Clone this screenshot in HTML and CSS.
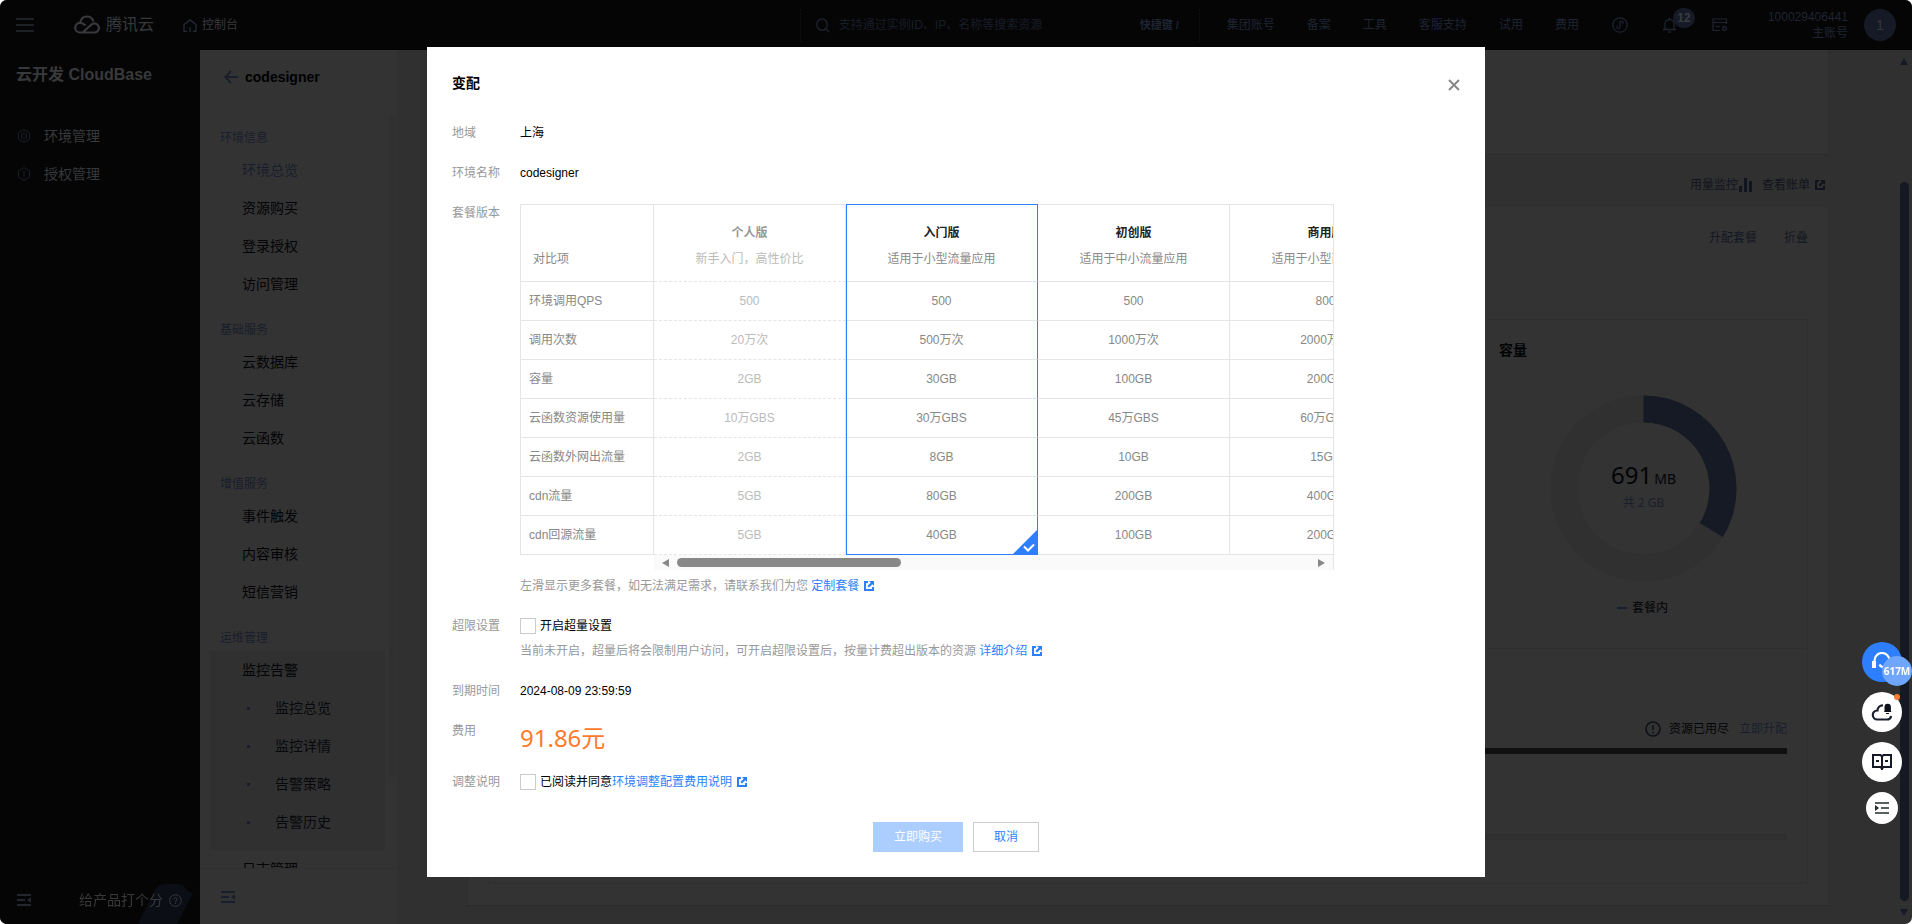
FILE: index.html
```html
<!DOCTYPE html>
<html lang="zh-CN">
<head>
<meta charset="utf-8">
<title>云开发 CloudBase</title>
<link rel="stylesheet" href="styles.css">
</head>
<body>
<svg class="defs" aria-hidden="true">
  <symbol id="ext" viewBox="0 0 10 10"><path d="M4 1H1v8h8V6" fill="none" stroke="currentColor" stroke-width="2"/><path d="M5 0h5v5L8.300 3.300 5 6.600 3.400 5l3.300-3.300z" fill="currentColor"/></symbol>
  <symbol id="fold" viewBox="0 0 14 12"><path d="M0 1h14M0 6h8M0 11h14" fill="none" stroke="currentColor" stroke-width="2"/><path d="M14 3v6l-4-3z" fill="currentColor"/></symbol>
</svg>
<header class="topbar">
  <button class="icon-btn burger" aria-label="菜单"><svg width="18" height="14" viewBox="0 0 18 14"><path d="M0 1h18M0 7h18M0 13h18" stroke="currentColor" stroke-width="1.5"/></svg></button>
  <a class="brand" href="#"><svg width="26" height="20" viewBox="0 0 26 20" fill="none" stroke="currentColor" stroke-width="2.2"><path d="M8.500 17.500L18 9.200a4.500 4.500 0 1 1 2.500 8.300H6a4.800 4.800 0 1 1 0-9.600c2.200 0 3.800 1 5.500 2.600M6.200 7.900C6.800 4 9.500 1.500 13 1.500c3 0 5.500 1.800 6.500 5"/></svg><span>腾讯云</span></a>
  <a class="home" href="#"><svg width="14" height="13" viewBox="0 0 14 13" fill="none" stroke="currentColor" stroke-width="1.300"><path d="M4 12.300H1V5.500L7 .9l6 4.600v6.800h-3M7 8v5"/></svg><span>控制台</span></a>
  <label class="search"><svg width="14" height="15" viewBox="0 0 14 15" fill="none" stroke="currentColor" stroke-width="1.300"><ellipse cx="6" cy="6.500" rx="5.200" ry="5.700"/><path d="M10 11l3.200 3"/></svg><input type="text" aria-label="搜索" placeholder="支持通过实例ID、IP、名称等搜索资源"><span class="hotkey">快捷键 /</span></label>
  <nav class="topnav"><a href="#">集团账号</a><a href="#">备案</a><a href="#">工具</a><a href="#">客服支持</a><a href="#">试用</a><a href="#">费用</a></nav>
  <div class="tools">
    <button class="icon-btn" aria-label="助手"><svg width="16" height="16" viewBox="0 0 16 16" fill="none" stroke="currentColor" stroke-width="1.200"><circle cx="8" cy="8" r="7.200"/><path d="M5 8.500v1.500a1.500 1.500 0 0 0 3 0V5.500a1.500 1.500 0 0 1 3 0V7"/></svg></button>
    <button class="icon-btn bell" aria-label="消息"><svg width="16" height="16" viewBox="0 0 16 16" fill="none" stroke="currentColor" stroke-width="1.300"><path d="M1 12.500h13M3 12V7a4.500 4.500 0 0 1 9 0v5M7.500 2.500V.5M6 15h3"/></svg><span class="count">12</span></button>
    <button class="icon-btn" aria-label="工单"><svg width="16" height="14" viewBox="0 0 16 14" fill="none" stroke="currentColor" stroke-width="1.200"><path d="M8 12.500H1V1h13.500v5M1 4.500h13.500M3.500 8.500h4"/><circle cx="12.500" cy="10.500" r="1.800"/><path d="M12.500 7.500v1M12.500 12.500v1M10 9l1 .6M15 9l-1 .6M10 12l1-.6M15 12l-1-.6"/></svg></button>
  </div>
  <div class="account"><div class="uid"><span>100029406441</span><span>主账号</span></div><span class="avatar">1</span></div>
</header>
<div class="shell">
  <aside class="side">
    <h2>云开发 CloudBase</h2>
    <nav>
      <a href="#"><svg width="14" height="14" viewBox="0 0 14 14" fill="none" stroke="currentColor"><path d="M7 .6l5.600 3.200v6.400L7 13.400 1.400 10.200V3.800z"/><circle cx="7" cy="7" r="2.500"/></svg>环境管理</a>
      <a href="#"><svg width="14" height="14" viewBox="0 0 14 14" fill="none" stroke="currentColor"><path d="M7 .6l5.600 3.200v6.400L7 13.400 1.400 10.200V3.800zM7 4v6"/></svg>授权管理</a>
    </nav>
    <div class="side-foot">
      <button class="icon-btn" aria-label="收起"><svg width="14" height="12"><use href="#fold"/></svg></button>
      <a href="#">给产品打个分<svg width="13" height="13" viewBox="0 0 13 13" fill="none" stroke="currentColor"><circle cx="6.500" cy="6.500" r="5.800"/><path d="M4.800 5.200a1.700 1.700 0 1 1 1.700 2v1M6.500 9v1"/></svg></a>
      <svg class="deco" width="55" height="40" viewBox="0 0 55 40"><path d="M0 40L17 6Q20 0 27 0h13q7 1 8 6l7 3L39 40z" fill="#0b0e15"/></svg>
    </div>
  </aside>
  <aside class="subnav">
    <a class="back" href="#"><svg width="14" height="14" viewBox="0 0 14 14" fill="none" stroke="#191e2c" stroke-width="2"><path d="M14 7H1.500M7 1L1.300 7 7 13"/></svg>codesigner</a>
    <div class="scroll">
      <nav>
        <h3>环境信息</h3>
        <a class="active" href="#">环境总览</a><a href="#">资源购买</a><a href="#">登录授权</a><a href="#">访问管理</a>
        <h3>基础服务</h3>
        <a href="#">云数据库</a><a href="#">云存储</a><a href="#">云函数</a>
        <h3>增值服务</h3>
        <a href="#">事件触发</a><a href="#">内容审核</a><a href="#">短信营销</a>
        <h3>运维管理</h3>
        <div class="group"><a href="#">监控告警</a><a class="sub" href="#">监控总览</a><a class="sub" href="#">监控详情</a><a class="sub" href="#">告警策略</a><a class="sub" href="#">告警历史</a></div>
        <a href="#">日志管理</a>
      </nav>
      <span class="rail"></span>
    </div>
    <div class="subnav-foot"><button class="icon-btn" aria-label="收起"><svg width="14" height="12"><use href="#fold"/></svg></button></div>
  </aside>
  <main class="main">
    <section class="card intro"></section>
    <div class="links"><a href="#">用量监控<svg width="13" height="14" viewBox="0 0 13 14"><path d="M0 8h3v6H0zM5 0h3v14H5zM10 3h3v11h-3z" fill="currentColor"/></svg></a><a href="#">查看账单<svg class="gap" width="10" height="10"><use href="#ext"/></svg></a></div>
    <section class="card usage">
      <div class="usage-head"><a href="#">升配套餐</a><a href="#">折叠</a></div>
      <div class="panel">
        <div class="panel-top">
          <div class="chart">
            <h3>容量</h3>
            <div class="donut">
              <svg width="187" height="187" viewBox="-93.500 -93.500 187 187" fill="none" stroke-width="27"><circle r="79.500" stroke="#303030"/><path d="M0 -79.500A79.500 79.500 0 0 1 67.800 41.500" stroke="#151a24"/></svg>
              <div class="donut-text"><p>691<small>MB</small></p><span>共 2 GB</span></div>
            </div>
            <p class="legend"><i></i>套餐内</p>
          </div>
        </div>
        <div class="quota">
          <p><svg width="16" height="16" viewBox="0 0 16 16" fill="none" stroke="#0d1017" stroke-width="1.500"><circle cx="8" cy="8" r="7"/><path d="M8 4v5M8 10.500v2"/></svg><span>资源已用尽</span><a href="#">立即升配</a></p>
          <div class="bar full"></div>
          <div class="bar"></div>
        </div>
      </div>
    </section>
  </main>
  <div class="page-scroll"><i class="up"></i><i class="thumb"></i><i class="down"></i></div>
</div>

<div class="overlay">
  <div class="dialog" role="dialog" aria-labelledby="dlg-title">
    <div class="dlg-head"><h1 id="dlg-title">变配</h1><button class="close" aria-label="关闭"><svg width="12" height="12" viewBox="0 0 12 12"><path d="M1 1l10 10M11 1L1 11" stroke="#888" stroke-width="2"/></svg></button></div>
    <div class="form">
      <div class="row"><span class="label">地域</span><div>上海</div></div>
      <div class="row"><span class="label">环境名称</span><div>codesigner</div></div>
      <div class="row"><span class="label">套餐版本</span>
        <div class="field">
          <div class="plans">
            <table>
              <thead><tr><th class="cmp">对比项</th><th class="off"><b>个人版</b><span>新手入门，高性价比</span></th><th class="sel"><b>入门版</b><span>适用于小型流量应用</span></th><th><b>初创版</b><span>适用于中小流量应用</span></th><th><b>商用版</b><span>适用于小型商业应用</span></th></tr></thead>
              <tbody>
                <tr><th>环境调用QPS</th><td class="off">500</td><td class="sel">500</td><td>500</td><td>800</td></tr>
                <tr><th>调用次数</th><td class="off">20万次</td><td class="sel">500万次</td><td>1000万次</td><td>2000万次</td></tr>
                <tr><th>容量</th><td class="off">2GB</td><td class="sel">30GB</td><td>100GB</td><td>200GB</td></tr>
                <tr><th>云函数资源使用量</th><td class="off">10万GBS</td><td class="sel">30万GBS</td><td>45万GBS</td><td>60万GBS</td></tr>
                <tr><th>云函数外网出流量</th><td class="off">2GB</td><td class="sel">8GB</td><td>10GB</td><td>15GB</td></tr>
                <tr><th>cdn流量</th><td class="off">5GB</td><td class="sel">80GB</td><td>200GB</td><td>400GB</td></tr>
                <tr><th>cdn回源流量</th><td class="off">5GB</td><td class="sel">40GB<svg class="tick" width="26" height="26" viewBox="0 0 26 26"><path d="M26 0v26H0z" fill="#2d7fff"/><path d="M12 17.500l4 4 6-6" fill="none" stroke="#fff" stroke-width="2"/></svg></td><td>100GB</td><td>200GB</td></tr>
              </tbody>
            </table>
            <div class="hscroll"><i class="left"></i><i class="thumb"></i><i class="right"></i></div>
          </div>
          <p class="hint">左滑显示更多套餐，如无法满足需求，请联系我们为您 <a href="#">定制套餐<svg width="10" height="10"><use href="#ext"/></svg></a></p>
        </div>
      </div>
      <div class="row"><span class="label">超限设置</span><div><label class="check"><input type="checkbox">开启超量设置</label><p class="hint sub-hint">当前未开启，超量后将会限制用户访问，可开启超限设置后，按量计费超出版本的资源 <a href="#">详细介绍<svg width="10" height="10"><use href="#ext"/></svg></a></p></div></div>
      <div class="row"><span class="label">到期时间</span><div>2024-08-09 23:59:59</div></div>
      <div class="row"><span class="label">费用</span><div class="price">91.86元</div></div>
      <div class="row"><span class="label">调整说明</span><div class="agree"><label class="check"><input type="checkbox">已阅读并同意</label><a href="#">环境调整配置费用说明<svg width="10" height="10"><use href="#ext"/></svg></a></div></div>
    </div>
    <div class="actions"><button class="btn primary" disabled>立即购买</button><button class="btn">取消</button></div>
  </div>
</div>

<div class="floaters">
  <button class="fab blue" aria-label="客服"><svg width="20" height="18" viewBox="0 0 20 18" fill="none" stroke="#fff" stroke-width="2.200"><path d="M2.500 10V8.500a7.500 7.500 0 0 1 15 0V12M7.500 12.500c1 2 3 3 5.500 2.500"/><path d="M0 9h4v7H0z" fill="#fff" stroke="none"/></svg><span class="mem">617M</span></button>
  <button class="fab" aria-label="云消息"><svg width="22" height="18" viewBox="0 0 22 18"><path d="M12 2.500a5 5 0 0 0-5.500 5C3 7.800 1.800 10 1.800 12c0 2.500 2 4.500 4.500 4.500h9.500c2.500 0 4-1.500 4.300-3.500" fill="none" stroke="#1b2130" stroke-width="2.200"/><path d="M13.500 8V4a3.200 3.200 0 0 1 6.400 0v4l.6 1h-7.600zM15 10h3v1h-3z" fill="#0e1118"/></svg><span class="dot"></span></button>
  <button class="fab" aria-label="文档"><svg width="20" height="16" viewBox="0 0 20 16" fill="none" stroke="#151a26" stroke-width="2"><path d="M10 2v14M10 2.500L8.500 1H1v12h7.500l1.500 1.500L11.500 13H19V1h-7.500zM4 7h3M13 7h3"/></svg></button>
  <button class="fab small" aria-label="展开"><svg width="14" height="12" viewBox="0 0 14 12"><path d="M0 1h14M6 6h8M0 11h14" fill="none" stroke="#222b2b" stroke-width="1.600"/><path d="M0 3v6l4-3z" fill="#222b2b"/></svg></button>
</div>
</body>
</html>
```
FILE: styles.css
```css
* { box-sizing: border-box; }
html { background: #fff; height: 100%; }
body {
  margin: 0;
  height: 100%;
  display: flex;
  flex-direction: column;
  overflow: hidden;
  border-radius: 7px;
  background: #303030;
  font: 12px/20px "Liberation Sans", "Noto Sans CJK SC", sans-serif;
  color: #000;
}
h1, h2, h3, p { margin: 0; }
a { color: inherit; text-decoration: none; }
button, input { font: inherit; color: inherit; }
svg { display: block; flex: none; }
.defs { position: absolute; width: 0; height: 0; }
.icon-btn { background: none; border: 0; padding: 0; display: flex; position: relative; }

/* top bar */
.topbar { flex: none; height: 50px; background: #050505; color: #1e2432; display: flex; align-items: center; padding: 0 16px; }
.burger { color: #252a33; }
.brand { display: flex; align-items: center; gap: 6px; margin-left: 40px; font-size: 16px; color: #38393c; }
.home { display: flex; align-items: center; gap: 5px; margin-left: 29px; color: #38393c; }
.home svg { color: #252a36; }
.search { display: flex; align-items: center; gap: 9px; margin-left: auto; width: 400px; height: 32px; padding: 0 20px 0 15px; border: dotted #101319; border-width: 0 1px; }
.search input { flex: 1; min-width: 0; border: 0; padding: 0; background: none; outline: 0; }
.search input::placeholder { color: #181d28; opacity: 1; }
.hotkey { font-size: 11px; font-weight: bold; }
.topnav { display: flex; gap: 32px; margin-left: 27px; }
.tools { display: flex; align-items: center; gap: 34px; margin-left: 33px; color: #1e2432; }
.count { position: absolute; left: 11px; top: -9px; min-width: 22px; height: 20px; padding: 0 3px; border-radius: 10px; background: #151a26; color: #3a3c42; font-weight: bold; text-align: center; }
.account { display: flex; align-items: center; gap: 16px; margin-left: 40px; }
.uid { display: flex; flex-direction: column; align-items: flex-end; line-height: 16px; }
.avatar { width: 32px; height: 32px; border-radius: 50%; background: #151a26; color: #33363e; text-align: center; line-height: 32px; font-size: 14px; }

/* sidebars */
.shell { flex: 1; min-height: 0; display: flex; }
.side { width: 200px; flex: none; background: #050505; color: #38393b; display: flex; flex-direction: column; padding: 13px 0 0; position: relative; }
.side h2 { padding: 0 16px; font-size: 16px; line-height: 24px; }
.side nav { margin-top: 30px; font-size: 14px; }
.side nav a { display: flex; align-items: center; gap: 13px; height: 38px; padding-left: 17px; }
.side nav svg { color: #1a1f2b; }
.side-foot { margin-top: auto; display: flex; align-items: center; justify-content: space-between; height: 48px; padding: 0 18px 0 17px; font-size: 14px; }
.side-foot a { display: flex; align-items: center; gap: 6px; position: relative; z-index: 1; }
.side-foot button { color: #23262e; }
.deco { position: absolute; right: 7px; bottom: 0; }
.subnav { width: 198px; flex: none; background: #333; border-right: 1px solid #2f2f2f; display: flex; flex-direction: column; }
.back { display: flex; align-items: center; gap: 7px; height: 54px; padding-left: 24px; font-size: 14px; font-weight: bold; }
.scroll { flex: 1; min-height: 0; display: flex; overflow: hidden; font-size: 14px; }
.scroll nav { flex: 1; padding: 7px 4px 0 10px; }
.scroll h3 { padding: 14px 0 0 10px; height: 40px; font-size: 12px; font-weight: normal; line-height: 26px; color: #191e2c; }
.scroll a { display: block; height: 38px; line-height: 38px; padding-left: 32px; color: #030406; }
.scroll a.active { color: #191e2c; }
.group { background: #303030; padding-bottom: 9px; }
.scroll a.sub { padding-left: 37px; display: flex; align-items: center; gap: 25px; color: #07090d; }
.scroll a.sub::before { content: ""; width: 3px; height: 3px; background: #191e2c; }
.rail { width: 7px; height: 662px; margin: 11px 1px 0 0; background: #303030; }
.subnav-foot { height: 56px; border-top: 1px solid #2f2f2f; padding: 22px 21px; color: #191e2c; }

/* page content */
.main { flex: 1; min-width: 0; display: flex; flex-direction: column; padding: 0 71px 18px 69px; color: #030406; }
.card { background: #333; border: 1px dotted #22252d; }
.intro { height: 105px; border-top: 0; }
.links { display: flex; justify-content: flex-end; align-items: center; gap: 10px; height: 52px; padding: 8px 4px 0 0; color: #10141e; }
.links a { display: flex; align-items: center; gap: 1px; }
.links .gap { margin-left: 4px; }
.usage { flex: 1; display: flex; flex-direction: column; border-top: 0; padding: 0 20px 21px; }
.usage-head { display: flex; justify-content: flex-end; align-items: center; gap: 27px; height: 61px; color: #141823; }
.panel { flex: 1; margin-top: 51px; border: 1px solid #2f2f2f; display: flex; flex-direction: column; }
.panel-top { display: flex; justify-content: flex-end; border-bottom: 1px solid #2f2f2f; }
.chart { width: 329px; padding: 19px 0 30px 21px; }
.chart h3 { font-size: 14px; line-height: 22px; }
.donut { position: relative; margin: 34px 0 0 51px; width: 187px; }
.donut-text { position: absolute; inset: 66px 0 0; text-align: center; font-family: "Noto Sans", "Noto Sans CJK SC", sans-serif; color: #1a1f2b; }
.donut-text p { font-size: 24px; line-height: 28px; color: #030406; }
.donut-text small { font-size: 14px; margin-left: 2px; }
.donut-text span { line-height: 20px; }
.legend { display: flex; align-items: center; justify-content: center; gap: 5px; margin-top: 16px; width: 287px; }
.legend i { width: 10px; height: 2px; background: #191e2c; }
.quota { padding: 70px 20px 0; }
.quota p { display: flex; align-items: center; justify-content: flex-end; gap: 8px; }
.quota a { margin-left: 2px; color: #191e2c; }
.bar { height: 6px; margin-top: 80px; background: #2f2f2f; }
.bar.full { margin-top: 9px; background: #101010; }
.page-scroll { width: 12px; flex: none; display: flex; flex-direction: column; align-items: center; padding: 8px 4px 8px 0; }
.page-scroll .thumb { flex: 1; width: 9px; margin: 117px 0 8px; border-radius: 5px; background: #151922; }
.up, .down { border: solid transparent; border-width: 0 4px 7px; border-bottom-color: #151a26; }
.down { border-width: 7px 4px 0; border-top-color: #151a26; }

/* dialog */
.overlay { position: fixed; inset: 0; display: flex; align-items: center; justify-content: center; }
.dialog { width: 1058px; max-width: 100%; background: #fff; padding: 24px 25px 25px; }
.dlg-head { display: flex; justify-content: space-between; align-items: center; height: 24px; }
.dlg-head h1 { font-size: 14px; line-height: 22px; }
.close { border: 0; background: none; padding: 3px 0 0; }
.form { display: flex; flex-direction: column; gap: 20px; margin-top: 28px; }
.row { display: flex; }
.label { width: 68px; flex: none; color: #999; }
.field { flex: 1; min-width: 0; padding-top: 1px; }
.plans { max-width: 814px; overflow: hidden; border-right: 1px solid #e5e5e9; }
table { table-layout: fixed; width: 902px; border-spacing: 0; border-top: 1px solid #e5e5e9; color: #888; text-align: center; }
th, td { width: 192px; height: 39px; padding: 0 8px; border: solid #e5e5e9; border-width: 0 1px 1px 0; font-weight: normal; position: relative; }
th:first-child { width: 134px; border-left-width: 1px; padding: 0 8px; text-align: left; }
thead th { height: 77px; padding: 15px 8px 0; line-height: 26px; vertical-align: top; white-space: nowrap; }
thead th:first-child.cmp { padding: 41px 12px 0; }
th b, th span { display: block; }
th b { color: #222; }
.off { color: #bbb; border-bottom-style: dashed; }
.off b { color: #999; }
.sel { border-right-color: #2d7fff; }
.sel::before { content: ""; position: absolute; inset: 0 auto -1px 0; width: 1px; background: #2d7fff; }
thead .sel::after { content: ""; position: absolute; inset: -1px -1px auto 0; height: 1px; background: #2d7fff; }
tbody tr:last-child .sel { border-bottom-color: #2d7fff; }
.tick { position: absolute; right: -1px; bottom: -1px; }
.hscroll { display: flex; align-items: center; height: 15px; margin-left: 134px; padding: 0 8px; background: #fafafa; }
.hscroll .thumb { width: 224px; height: 9px; margin: 0 auto 0 8px; border-radius: 5px; background: #888; }
.left, .right { border: solid transparent; border-width: 4px 7px 4px 0; border-right-color: #888; }
.right { border-width: 4px 0 4px 7px; border-left-color: #888; }
.hint { color: #999; padding-top: 6px; }
.sub-hint { padding-top: 5px; }
.form a { color: #2d7fff; }
.form a svg { display: inline-block; vertical-align: -1px; margin-left: 5px; }
.check { display: inline-flex; align-items: center; gap: 4px; vertical-align: top; }
.check input { appearance: none; width: 16px; height: 16px; margin: 0; border: 1px solid #ccc; background: #fff; }
.price { padding-top: 3px; font: 24px/28px "Noto Sans", "Noto Sans CJK SC", sans-serif; color: #ff7a2b; }
.actions { display: flex; justify-content: center; gap: 10px; margin-top: 30px; }
.btn { height: 30px; padding: 0 20px; border: 1px solid #ccc; background: #fff; color: #2d7fff; }
.btn.primary { border-color: #abceff; background: #abceff; color: #fff; }

/* floating tools */
.floaters { position: fixed; right: 10px; top: 642px; display: flex; flex-direction: column; align-items: center; gap: 10px; }
.fab { position: relative; width: 40px; height: 40px; padding: 0; border: 0; border-radius: 50%; background: #fff; display: flex; align-items: center; justify-content: center; }
.fab.blue { background: #2d7fff; padding-bottom: 3px; }
.fab.small { width: 32px; height: 32px; }
.mem { position: absolute; left: 20px; top: 14px; width: 30px; height: 30px; border-radius: 50%; background: #6fa5fb; color: #fff; font: bold 10px/30px "Noto Sans", sans-serif; text-align: center; display: flex; justify-content: center; }
.dot { position: absolute; right: 2px; top: 2px; width: 6px; height: 6px; border-radius: 50%; background: #ff7a2b; }
```
